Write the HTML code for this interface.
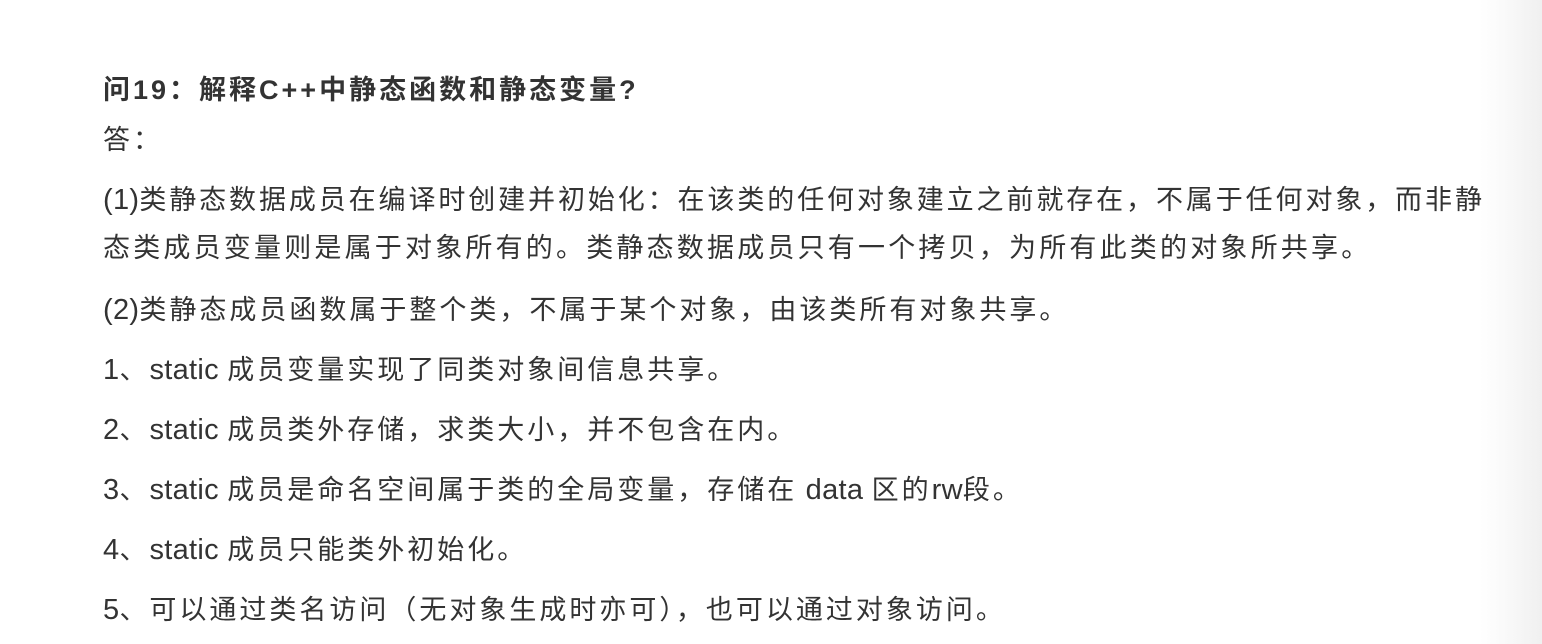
<!DOCTYPE html>
<html><head><meta charset="utf-8"><style>
html,body{margin:0;padding:0}
body{width:1542px;height:644px;overflow:hidden;position:relative;
background:linear-gradient(to right,#fff 0,#fff 1480px,#f7f7f7 1515px,#f0f0f0 1542px);
font-family:"Liberation Sans","Noto Sans CJK SC",sans-serif;color:#333;}
.l{position:absolute;left:103px;height:40px;line-height:40px;font-size:27px;letter-spacing:3px;white-space:nowrap}
.b{font-weight:bold;letter-spacing:3px}
.e{font-size:29px;letter-spacing:0.3px}
</style></head><body>
<div class="l b" style="top:70px">问19：解释C++中静态函数和静态变量?</div>
<div class="l" style="top:120px">答：</div>
<div class="l" style="top:180px;letter-spacing:2.9px"><span class="e">(1)</span>类静态数据成员在编译时创建并初始化：在该类的任何对象建立之前就存在，不属于任何对象，而非静</div>
<div class="l" style="top:228px;letter-spacing:3.2px">态类成员变量则是属于对象所有的。类静态数据成员只有一个拷贝，为所有此类的对象所共享。</div>
<div class="l" style="top:290px"><span class="e">(2)</span>类静态成员函数属于整个类，不属于某个对象，由该类所有对象共享。</div>
<div class="l" style="top:350px"><span class="e">1</span>、<span class="e">static </span>成员变量实现了同类对象间信息共享。</div>
<div class="l" style="top:410px"><span class="e">2</span>、<span class="e">static </span>成员类外存储，求类大小，并不包含在内。</div>
<div class="l" style="top:470px"><span class="e">3</span>、<span class="e">static </span>成员是命名空间属于类的全局变量，存储在<span class="e"> data </span>区的<span class="e">rw</span>段。</div>
<div class="l" style="top:530px"><span class="e">4</span>、<span class="e">static </span>成员只能类外初始化。</div>
<div class="l" style="top:590px"><span class="e">5</span>、可以通过类名访问（无对象生成时亦可），也可以通过对象访问。</div>
</body></html>
